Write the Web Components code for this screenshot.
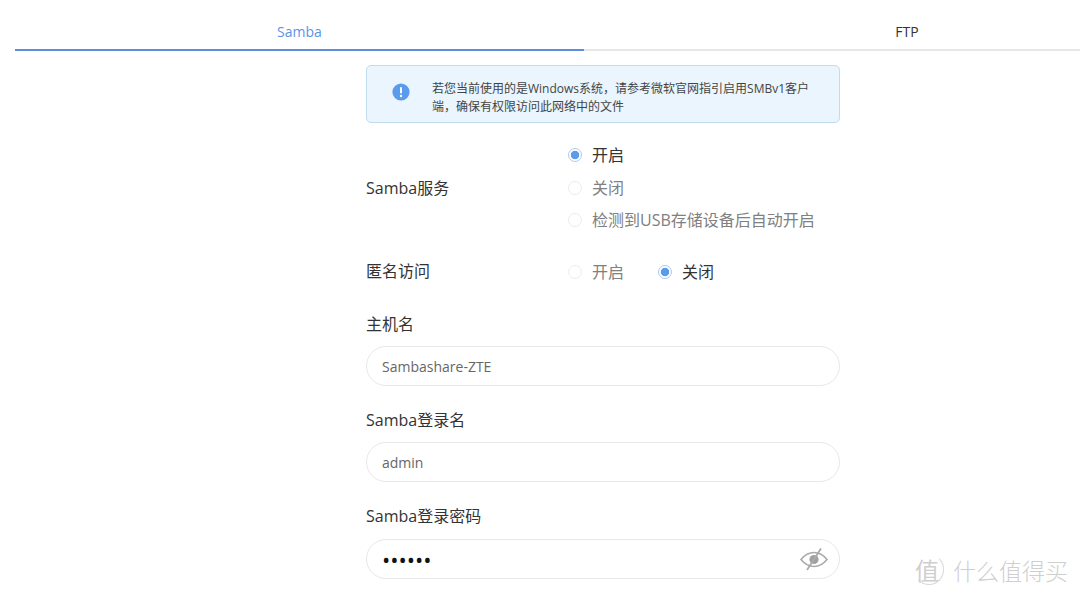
<!DOCTYPE html>
<html lang="zh-CN">
<head>
<meta charset="utf-8">
<title>Samba</title>
<style>
    html, body { margin: 0; height: 595px; overflow: hidden; background: #fff; }
    body {
        font-family: "Open Sans", "Noto Sans CJK SC", sans-serif;
        color: #333;
    }
</style>
</head>
<body>
<share-page>
    <tab-bar slot="tabs">
        <tab-item active>Samba</tab-item>
        <tab-item>FTP</tab-item>
    </tab-bar>
    <info-alert>若您当前使用的是Windows系统，请参考微软官网指引启用SMBv1客户端，确保有权限访问此网络中的文件</info-alert>
    <radio-row label="Samba服务" stacked>
        <radio-option checked>开启</radio-option>
        <radio-option>关闭</radio-option>
        <radio-option>检测到USB存储设备后自动开启</radio-option>
    </radio-row>
    <radio-row label="匿名访问">
        <radio-option>开启</radio-option>
        <radio-option checked>关闭</radio-option>
    </radio-row>
    <text-field label="主机名" value="Sambashare-ZTE"></text-field>
    <text-field label="Samba登录名" value="admin"></text-field>
    <text-field label="Samba登录密码" value="••••••" secret></text-field>
</share-page>
<site-mark></site-mark>

<script>
class SharePage extends HTMLElement {
    constructor() {
        super();
        this.attachShadow({ mode: 'open' }).innerHTML = `
            <style>
                :host { display: block; padding-top: 14px; }
                main {
                    display: flex;
                    flex-direction: column;
                    width: 474px;
                    margin: 14px 0 0 366px;
                }
            </style>
            <slot name="tabs"></slot>
            <main><slot></slot></main>
        `
    }
}

class TabBar extends HTMLElement {
    constructor() {
        super();
        this.attachShadow({ mode: 'open' }).innerHTML = `
            <style>
                :host { display: flex; height: 37px; margin-left: 15px; }
            </style>
            <slot></slot>
        `
    }
}

class TabItem extends HTMLElement {
    constructor() {
        super();
        this.attachShadow({ mode: 'open' }).innerHTML = `
            <style>
                :host {
                    display: flex;
                    flex: 1;
                    justify-content: center;
                    padding: 9px 0 0 150px;
                    box-sizing: border-box;
                    border-bottom: 2px solid #e6e6e6;
                    font-size: 14px;
                    line-height: 18px;
                    color: #333;
                }
                :host([active]) {
                    flex: 0 0 569px;
                    padding-left: 0;
                    border-bottom-color: #5b8fdc;
                    color: #5b94e6;
                }
            </style>
            <slot></slot>
        `
    }
}

class InfoAlert extends HTMLElement {
    constructor() {
        super();
        this.attachShadow({ mode: 'open' }).innerHTML = `
            <style>
                :host {
                    display: flex;
                    align-items: center;
                    box-sizing: border-box;
                    height: 58px;
                    padding: 0 20px 0 25px;
                    background: #eaf5fd;
                    border: 1px solid #bfdcf0;
                    border-radius: 5px;
                    font-size: 12px;
                    line-height: 18px;
                    color: #444;
                }
                svg { flex: none; width: 18px; height: 18px; margin: 0 22px 5px 0; }
                div { width: 384px; padding-top: 7px; }
            </style>
            <svg viewBox="0 0 18 18">
                <circle cx="9" cy="9" r="8.6" fill="#5b9bec"/>
                <rect x="8" y="4" width="2" height="6.6" rx="1" fill="#fff"/>
                <circle cx="9" cy="13" r="1.2" fill="#fff"/>
            </svg>
            <div><slot></slot></div>
        `
    }
}

class RadioRow extends HTMLElement {
    constructor() {
        super();
        this.attachShadow({ mode: 'open' }).innerHTML = `
            <style>
                :host {
                    display: flex;
                    align-items: center;
                    margin: 28px 0 7px;
                    font-size: 16px;
                    color: #333;
                }
                :host([stacked]) { margin: 19px 0 0; }
                label { flex: 0 0 202px; line-height: 24px; }
                :host([stacked]) label { padding-top: 2px; }
                div { display: flex; gap: 34px; }
                :host([stacked]) div { flex-direction: column; gap: 8.5px; }
            </style>
            <label></label>
            <div><slot></slot></div>
        `
    }

    connectedCallback() {
        this.shadowRoot.querySelector('label').textContent = this.getAttribute('label')
    }
}

class RadioOption extends HTMLElement {
    constructor() {
        super();
        this.attachShadow({ mode: 'open' }).innerHTML = `
            <style>
                :host {
                    display: flex;
                    align-items: center;
                    gap: 10px;
                    height: 24px;
                    font-size: 16px;
                    color: #808080;
                }
                :host([checked]) { color: #333; }
                i {
                    box-sizing: border-box;
                    width: 14px;
                    height: 14px;
                    margin-top: 2px;
                    border: 1px solid #ededed;
                    border-radius: 50%;
                    background: #fff;
                }
                :host([checked]) i {
                    border-color: #a9cbf5;
                    background: radial-gradient(circle, #5b9bec 0 3.8px, #fff 4.6px);
                }
            </style>
            <i></i><span><slot></slot></span>
        `
    }
}

class TextField extends HTMLElement {
    constructor() {
        super();
        this.attachShadow({ mode: 'open' }).innerHTML = `
            <style>
                :host { display: block; margin-top: 22px; }
                label {
                    display: block;
                    font-size: 16px;
                    line-height: 24px;
                    color: #333;
                    margin-bottom: 10px;
                }
                :host([secret]) label { margin-bottom: 11px; }
                div {
                    display: flex;
                    align-items: center;
                    justify-content: space-between;
                    box-sizing: border-box;
                    height: 40px;
                    padding: 0 10px 0 15px;
                    border: 1px solid #e8e8e8;
                    border-radius: 20px;
                    font-size: 14px;
                    color: #666;
                }
                :host([secret]) span { color: #111; font-size: 22px; line-height: 22px; }
                svg { width: 30px; height: 24px; }
            </style>
            <label></label>
            <div><span></span></div>
        `
    }

    connectedCallback() {
        this.shadowRoot.querySelector('label').textContent = this.getAttribute('label')
        this.shadowRoot.querySelector('span').textContent = this.getAttribute('value')
        if (this.hasAttribute('secret')) {
            this.shadowRoot.querySelector('div').insertAdjacentHTML('beforeend', `
                <svg viewBox="0 0 30 24" fill="none" stroke="#aaa" stroke-width="1.6">
                    <path d="M2 12.5C6 7.5 10 5.5 15 5.5s9 2 13 7c-4 5-8 7-13 7s-9-2-13-7z"/>
                    <circle cx="15" cy="12.5" r="4.6" fill="#a0a0a0" stroke="none"/>
                    <path d="M22 1.5L8 23" stroke-width="1.8"/>
                </svg>
            `)
        }
    }
}

class SiteMark extends HTMLElement {
    constructor() {
        super();
        this.attachShadow({ mode: 'open' }).innerHTML = `
            <style>
                :host {
                    position: absolute;
                    left: 914px;
                    top: 554px;
                    display: flex;
                    align-items: center;
                    gap: 9px;
                    color: #cfcfcf;
                    font-family: "Noto Sans CJK SC", sans-serif;
                }
                b {
                    display: flex;
                    align-items: center;
                    box-sizing: border-box;
                    width: 30px;
                    height: 31px;
                    border: 1px solid #d8d8d8;
                    border-color: transparent #d8d8d8 #d8d8d8 transparent;
                    border-radius: 50%;
                    font-weight: 400;
                    font-size: 24px;
                }
                span { font-size: 23px; line-height: 30px; font-weight: 300; }
            </style>
            <b>值</b><span>什么值得买</span>
        `
    }
}

customElements.define("share-page", SharePage)
customElements.define("tab-bar", TabBar)
customElements.define("tab-item", TabItem)
customElements.define("info-alert", InfoAlert)
customElements.define("radio-row", RadioRow)
customElements.define("radio-option", RadioOption)
customElements.define("text-field", TextField)
customElements.define("site-mark", SiteMark)
</script>
</body>
</html>
